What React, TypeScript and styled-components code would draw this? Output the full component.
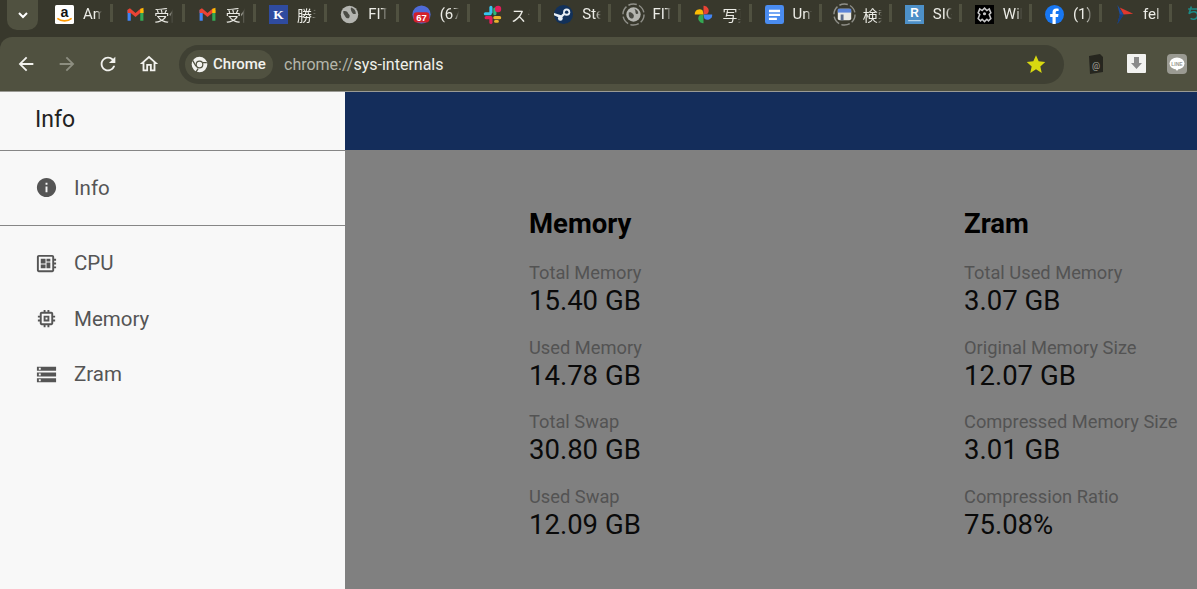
import React from 'react';
import styled, { createGlobalStyle } from 'styled-components';

const GlobalStyle = createGlobalStyle`
  html, body { margin: 0; padding: 0; height: 100%; overflow: hidden; background: #808080; }
  #root { height: 100%; }
  * { box-sizing: border-box; }
`;

const Page = styled.div`
  width: 1197px;
  height: 589px;
  display: flex;
  flex-direction: column;
  overflow: hidden;
  font-family: Roboto, 'Noto Sans CJK JP', sans-serif;
`;

const TabStrip = styled.div`
  height: 37px;
  flex: none;
  display: flex;
  align-items: flex-start;
  background: #38382c;
  padding-left: 7px;
  overflow: hidden;
`;

const TabSearch = styled.div`
  width: 31px;
  height: 30px;
  flex: none;
  margin-right: 4px;
  background: #505140;
  border-radius: 0 0 10px 10px;
  display: flex;
  align-items: center;
  justify-content: center;
`;

const Tab = styled.div<{ $narrow?: boolean }>`
  width: ${(p) => (p.$narrow ? '70.1px' : '71.33px')};
  height: 28px;
  flex: none;
  display: flex;
  align-items: center;
  padding-left: 13px;
  position: relative;
  &::after {
    content: '';
    position: absolute;
    right: 0;
    top: 4px;
    width: 3px;
    height: 18px;
    background: #505140;
  }
`;

const Favicon = styled.svg<{ $large?: boolean }>`
  width: ${(p) => (p.$large ? '23px' : '19px')};
  height: ${(p) => (p.$large ? '23px' : '19px')};
  margin: ${(p) => (p.$large ? '0 -2px' : '0')};
  flex: none;
`;

const TabTitle = styled.span`
  width: 19px;
  margin-left: 9px;
  overflow: hidden;
  white-space: nowrap;
  font-size: 15px;
  color: #ecece6;
  -webkit-mask-image: linear-gradient(to right, #000 70%, transparent 100%);
  mask-image: linear-gradient(to right, #000 70%, transparent 100%);
`;

const ToolbarBack = styled.div`
  height: 55px;
  flex: none;
  background: #38382c;
`;

const Toolbar = styled.div`
  height: 55px;
  display: flex;
  align-items: center;
  padding-left: 6px;
  background: #505140;
  border-top-left-radius: 12px;
  border-bottom: 1px solid #9a9a94;
`;

const NavButton = styled.div<{ $dim?: boolean }>`
  width: 40px;
  margin-right: 1px;
  flex: none;
  display: flex;
  justify-content: center;
  color: ${(p) => (p.$dim ? '#8d8e80' : '#f2f2ee')};
`;

const Omnibox = styled.div`
  width: 885px;
  height: 39px;
  flex: none;
  margin-left: 9px;
  border-radius: 20px;
  background: #3f4033;
  display: flex;
  align-items: center;
  padding: 0 18px 0 6px;
`;

const Chip = styled.div`
  width: 88px;
  height: 29px;
  border-radius: 15px;
  background: #505140;
  display: flex;
  align-items: center;
  gap: 5px;
  padding-left: 6px;
  font-size: 15px;
  font-weight: 500;
  color: #f2f2ee;
`;

const Url = styled.div`
  flex: 1;
  margin-left: 11px;
  font-size: 16px;
  color: #f0f0ea;
`;

const UrlScheme = styled.span`
  color: #b4b5aa;
`;

const Extensions = styled.div`
  display: flex;
  flex: none;
  margin-left: 12px;
`;

const Extension = styled.div`
  width: 40.5px;
  display: flex;
  justify-content: center;
`;

const Main = styled.div`
  flex: 1;
  display: flex;
  min-height: 0;
`;

const Sidebar = styled.nav`
  width: 345px;
  flex: none;
  background: #f8f8f8;
`;

const SidebarTitle = styled.div`
  height: 59px;
  padding: 12px 0 0 35px;
  font-size: 23px;
  line-height: 32px;
  color: #222;
  border-bottom: 1px solid #868686;
`;

const InfoGroup = styled.div`
  height: 75px;
  padding-top: 9px;
  border-bottom: 1px solid #868686;
`;

const NavList = styled.div`
  padding-top: 9.5px;
`;

const NavItem = styled.div`
  height: 55.5px;
  display: flex;
  align-items: center;
  padding-left: 35px;
  font-size: 20.5px;
  color: #555;
  svg {
    width: 23px;
    height: 23px;
    margin-right: 16px;
    fill: #555;
  }
`;

const Content = styled.div`
  flex: 1;
  background: #808080;
  display: flex;
  flex-direction: column;
`;

const Banner = styled.div`
  height: 58px;
  flex: none;
  background: #142d5b;
`;

const Columns = styled.div`
  display: grid;
  grid-template-columns: 435px 1fr;
  padding: 57px 0 0 184px;
`;

const Column = styled.section`
  display: flex;
  flex-direction: column;
`;

const Heading = styled.h2`
  margin: 0 0 21px;
  font-size: 27.5px;
  line-height: 34px;
  font-weight: 700;
  color: #000;
`;

const Stat = styled.div`
  height: 74.5px;
  white-space: nowrap;
`;

const StatLabel = styled.div`
  font-size: 18.3px;
  line-height: 22px;
  color: #535353;
`;

const StatValue = styled.div`
  margin-top: 1px;
  font-size: 27.5px;
  line-height: 32px;
  color: #0a0a0a;
`;

const Ring = () => (
  <circle cx="12" cy="12" r="11" fill="none" stroke="#8f8f88" strokeWidth="1.5" strokeDasharray="9 2.5" />
);

const favicons: Record<string, React.ReactNode> = {
  amazon: (
    <>
      <rect width="24" height="24" rx="2" fill="#fff" />
      <text x="12" y="15" textAnchor="middle" fontSize="18" fontWeight="700" fontFamily="Liberation Sans" fill="#111">a</text>
      <path d="M3 17c5 4 13 4 18 0" fill="none" stroke="#f90" strokeWidth="2" />
    </>
  ),
  gmail: (
    <>
      <path d="M2 6v14h4V10z" fill="#4285f4" />
      <path d="M22 6v14h-4V10z" fill="#34a853" />
      <path d="M2 6l3-2 7 6 7-6 3 2v4l-4 0-6 5-6-5-4 0z" fill="#ea4335" />
      <path d="M18 5l4-1.500V10h-4z" fill="#fbbc04" />
    </>
  ),
  k: (
    <>
      <rect width="24" height="24" fill="#2f4b9f" />
      <text x="12" y="18" textAnchor="middle" fontSize="17" fontWeight="700" fontFamily="Liberation Serif" fill="#fff">K</text>
    </>
  ),
  globe: (
    <>
      <circle cx="12" cy="12" r="11" fill="#b4b5b0" />
      <path d="M4 8c3-1 5 0 6 2s3 2 2 5-4 2-5 0-3-3-3-7zM14 3c4 1 6 4 6 8-2 1-4 0-5-2s-2-4-1-6z" fill="#4b4c45" />
    </>
  ),
  cal: (
    <>
      <circle cx="12" cy="12" r="11.500" fill="#4f6bd8" />
      <rect x="2" y="9" width="20" height="13" rx="4" fill="#d3202a" />
      <text x="12" y="20" textAnchor="middle" fontSize="12" fontWeight="700" fontFamily="Liberation Sans" fill="#fff">67</text>
    </>
  ),
  slack: (
    <>
      <rect x="1" y="9" width="10" height="4" rx="2" fill="#36c5f0" />
      <rect x="8" y="1" width="4" height="10" rx="2" fill="#36c5f0" />
      <rect x="13" y="3" width="4" height="10" rx="2" fill="#2eb67d" />
      <circle cx="19" cy="5" r="4" fill="#e01e5a" />
      <rect x="13" y="14" width="10" height="4" rx="2" fill="#ecb22e" />
      <rect x="2" y="14" width="10" height="4" rx="2" fill="#e01e5a" />
      <rect x="8" y="15" width="4" height="9" rx="2" fill="#e01e5a" />
      <rect x="14" y="19" width="6" height="3.500" rx="1.700" fill="#ecb22e" />
    </>
  ),
  steam: (
    <>
      <circle cx="12" cy="12" r="12" fill="#12315a" />
      <circle cx="16" cy="9" r="4.500" fill="#e8eef4" />
      <circle cx="16" cy="9" r="2.200" fill="#12315a" />
      <path d="M0 13l9 4 5-5-2-2-3 3-9-3z" fill="#e8eef4" />
      <circle cx="8" cy="17" r="3" fill="#e8eef4" />
    </>
  ),
  ringGlobe: (
    <>
      <Ring />
      <circle cx="12" cy="12" r="7.500" fill="#b4b5b0" />
      <path d="M7 10c2-1 3 0 4 1s2 2 1 4-3 1-4 0-1-3-1-5zM13 6c3 1 4 3 4 5-2 1-3 0-3-2s-1-2-1-3z" fill="#4b4c45" />
    </>
  ),
  photos: (
    <>
      <path d="M12 12V1a6 6 0 0 1 5 10z" fill="#ea4335" />
      <path d="M12 12h11a6 6 0 0 1-10 5z" fill="#4285f4" />
      <path d="M12 12v11a6 6 0 0 1-5-10z" fill="#34a853" />
      <path d="M12 12H1a6 6 0 0 1 10-5z" fill="#fbbc04" />
    </>
  ),
  docs: (
    <>
      <rect width="24" height="24" rx="3" fill="#4a8cf0" />
      <path d="M5 6h14v3H5zM5 11h14v3H5zM5 16h10v3H5z" fill="#fff" />
    </>
  ),
  ringStore: (
    <>
      <Ring />
      <rect x="5" y="6" width="14" height="12" rx="2" fill="#e8e8e4" />
      <rect x="5" y="6" width="14" height="4" fill="#5b84d8" />
      <rect x="8" y="12" width="3" height="6" fill="#5b6b88" />
    </>
  ),
  r: (
    <>
      <rect width="24" height="24" fill="#4d90c8" />
      <text x="12" y="15" textAnchor="middle" fontSize="15" fontWeight="700" fontFamily="Liberation Sans" fill="#fff">R</text>
      <rect x="4" y="19" width="16" height="1.500" fill="#bcd8ee" />
    </>
  ),
  space: (
    <>
      <rect width="24" height="24" fill="#000" />
      <path d="M12 4l3 3 3-2 2 5-2 2 2 5-3 3-2-2-3 3-3-3-2 2-3-3 2-5-2-2 2-5 3 2z" fill="none" stroke="#c8c8c8" strokeWidth="2" />
      <circle cx="12" cy="11" r="2" fill="#c8c8c8" />
    </>
  ),
  facebook: (
    <>
      <circle cx="12" cy="12" r="12" fill="#1877f2" />
      <path d="M13.500 24v-9h3l.6-3.500h-3.600V9.500c0-1.100.5-2 2-2h1.700V4.600c-1-.2-2-.3-3-.3-3 0-4.700 1.800-4.700 4.800v2.400H6.500V15h3v9z" fill="#fff" />
    </>
  ),
  fel: (
    <>
      <path d="M3 0l8 12-8 12 3-12z" fill="#1d4e9e" />
      <path d="M6 3l17 8-12 1z" fill="#e0382e" />
      <path d="M11 12l-5 0-3 12z" fill="#173d7c" />
    </>
  ),
  last: (
    <>
      <path d="M4 5h13M8 2l-3 9c4-4 11-3 11 2s-6 6-9 4M17 11c2 1 3 3 3 6" fill="none" stroke="#1b8a86" strokeWidth="2" />
    </>
  ),
};

const tabs = [
  { icon: 'amazon', title: 'Amazon' },
  { icon: 'gmail', title: '受信トレイ' },
  { icon: 'gmail', title: '受信トレイ' },
  { icon: 'k', title: '勝手' },
  { icon: 'globe', title: 'FIT' },
  { icon: 'cal', title: '(67)' },
  { icon: 'slack', title: 'スラ' },
  { icon: 'steam', title: 'Steam', narrow: true },
  { icon: 'ringGlobe', title: 'FIT', narrow: true, large: true },
  { icon: 'photos', title: '写真', narrow: true },
  { icon: 'docs', title: 'Untitled', narrow: true },
  { icon: 'ringStore', title: '検索', narrow: true, large: true },
  { icon: 'r', title: 'SIGN', narrow: true },
  { icon: 'space', title: 'Wiki', narrow: true },
  { icon: 'facebook', title: '(1)', narrow: true },
  { icon: 'fel', title: 'fel', narrow: true },
  { icon: 'last', title: '', narrow: true },
];

const stats = [
  {
    title: 'Memory',
    rows: [
      ['Total Memory', '15.40 GB'],
      ['Used Memory', '14.78 GB'],
      ['Total Swap', '30.80 GB'],
      ['Used Swap', '12.09 GB'],
    ],
  },
  {
    title: 'Zram',
    rows: [
      ['Total Used Memory', '3.07 GB'],
      ['Original Memory Size', '12.07 GB'],
      ['Compressed Memory Size', '3.01 GB'],
      ['Compression Ratio', '75.08%'],
    ],
  },
];

function Icon({ d, size = 22 }: { d: string; size?: number }) {
  return (
    <svg width={size} height={size} viewBox="0 0 24 24" fill="currentColor">
      <path d={d} />
    </svg>
  );
}

const ICONS = {
  back: 'M20 11H7.83l5.59-5.59L12 4l-8 8 8 8 1.41-1.41L7.83 13H20v-2z',
  forward: 'M4 11h12.17l-5.59-5.59L12 4l8 8-8 8-1.41-1.41L16.17 13H4v-2z',
  refresh:
    'M17.65 6.35C16.2 4.9 14.21 4 12 4c-4.42 0-7.99 3.58-7.99 8s3.57 8 7.99 8c3.73 0 6.84-2.55 7.73-6h-2.08c-.82 2.33-3.04 4-5.65 4-3.31 0-6-2.69-6-6s2.69-6 6-6c1.66 0 3.14.69 4.22 1.78L13 11h7V4l-2.35 2.35z',
  home: 'M12 5.69l5 4.5V18h-2v-6H9v6H7v-7.81l5-4.5M12 3L2 12h3v8h6v-6h2v6h6v-8h3L12 3z',
  info: 'M12 2C6.48 2 2 6.48 2 12s4.48 10 10 10 10-4.48 10-10S17.52 2 12 2zm1 15h-2v-6h2v6zm0-8h-2V7h2v2z',
  cpu: 'M22 9V7h-2V5c0-1.1-.9-2-2-2H4c-1.100 0-2 .9-2 2v14c0 1.100.9 2 2 2h14c1.100 0 2-.9 2-2v-2h2v-2h-2v-2h2v-2h-2V9h2zm-4 10H4V5h14v14zM6 13h5v4H6zm6-6h4v3h-4zM6 7h5v5H6zm6 4h4v6h-4z',
  memory:
    'M15 9H9v6h6V9zm-2 4h-2v-2h2v2zm8-2V9h-2V7c0-1.100-.9-2-2-2h-2V3h-2v2h-2V3H9v2H7c-1.100 0-2 .9-2 2v2H3v2h2v2H3v2h2v2c0 1.100.9 2 2 2h2v2h2v-2h2v2h2v-2h2c1.100 0 2-.9 2-2v-2h2v-2h-2v-2h2zm-4 6H7V7h10v10z',
  zram: 'M2 20h20v-4H2v4zm2-3h2v2H4v-2zM2 4v4h20V4H2zm4 3H4V5h2v2zm-4 7h20v-4H2v4zm2-3h2v2H4v-2z',
};

export default function App() {
  return (
    <Page>
      <GlobalStyle />
      <TabStrip>
        <TabSearch>
          <svg width="14" height="14" viewBox="0 0 14 14">
            <path d="M3 5l4 4 4-4" fill="none" stroke="#fff" strokeWidth="2" />
          </svg>
        </TabSearch>
        {tabs.map((tab, i) => (
          <Tab key={i} $narrow={tab.narrow}>
            <Favicon viewBox="0 0 24 24" $large={tab.large}>
              {favicons[tab.icon]}
            </Favicon>
            <TabTitle>{tab.title}</TabTitle>
          </Tab>
        ))}
      </TabStrip>
      <ToolbarBack>
        <Toolbar>
          <NavButton>
            <Icon d={ICONS.back} />
          </NavButton>
          <NavButton $dim>
            <Icon d={ICONS.forward} />
          </NavButton>
          <NavButton>
            <Icon d={ICONS.refresh} />
          </NavButton>
          <NavButton>
            <Icon d={ICONS.home} />
          </NavButton>
          <Omnibox>
            <Chip>
              <svg width="17" height="17" viewBox="0 0 24 24">
                <circle cx="12" cy="12" r="11" fill="#f2f2ee" />
                <path d="M7 14.500L2.500 6.500M16.800 9.200h5.500M10 17.800l-3 5" stroke="#505140" strokeWidth="1.800" />
                <circle cx="12" cy="12" r="5.500" fill="#505140" />
                <circle cx="12" cy="12" r="3.800" fill="#f2f2ee" />
              </svg>
              Chrome
            </Chip>
            <Url>
              <UrlScheme>chrome://</UrlScheme>sys-internals
            </Url>
            <svg width="20" height="20" viewBox="0 0 24 24">
              <path d="M12 1.500l3.200 7.300 7.900.8-5.900 5.300 1.700 7.800L12 18.400l-6.900 4.300 1.700-7.800L.9 9.600l7.900-.8z" fill="#d8d810" />
            </svg>
          </Omnibox>
          <Extensions>
            <Extension>
              <svg width="16" height="20" viewBox="0 0 16 20">
                <path d="M1 2l11-2 3 3v15l-13 2z" fill="#26261f" />
                <text x="8" y="15" textAnchor="middle" fontSize="9" fontFamily="Roboto" fill="#a8a8a0">@</text>
              </svg>
            </Extension>
            <Extension>
              <svg width="19" height="19" viewBox="0 0 19 19">
                <rect width="19" height="19" rx="1" fill="#f2f2f0" />
                <path d="M7 3h5v6h3l-5.500 6L4 9h3z" fill="#8a8a8a" />
              </svg>
            </Extension>
            <Extension>
              <svg width="20" height="20" viewBox="0 0 20 20">
                <rect width="20" height="20" rx="4" fill="#9a9a92" />
                <ellipse cx="10" cy="9.500" rx="7.500" ry="6" fill="#fff" />
                <path d="M8 14l2 3 2-3z" fill="#fff" />
                <text x="10" y="11.500" textAnchor="middle" fontSize="5" fontWeight="700" fontFamily="Liberation Sans" fill="#9a9a92">LINE</text>
              </svg>
            </Extension>
          </Extensions>
        </Toolbar>
      </ToolbarBack>
      <Main>
        <Sidebar>
          <SidebarTitle>Info</SidebarTitle>
          <InfoGroup>
            <NavItem>
              <svg viewBox="0 0 24 24">
                <path d={ICONS.info} />
              </svg>
              Info
            </NavItem>
          </InfoGroup>
          <NavList>
            <NavItem>
              <svg viewBox="0 0 24 24">
                <path d={ICONS.cpu} />
              </svg>
              CPU
            </NavItem>
            <NavItem>
              <svg viewBox="0 0 24 24">
                <path d={ICONS.memory} />
              </svg>
              Memory
            </NavItem>
            <NavItem>
              <svg viewBox="0 0 24 24">
                <path d={ICONS.zram} />
              </svg>
              Zram
            </NavItem>
          </NavList>
        </Sidebar>
        <Content>
          <Banner />
          <Columns>
            {stats.map((col) => (
              <Column key={col.title}>
                <Heading>{col.title}</Heading>
                {col.rows.map(([label, value]) => (
                  <Stat key={label}>
                    <StatLabel>{label}</StatLabel>
                    <StatValue>{value}</StatValue>
                  </Stat>
                ))}
              </Column>
            ))}
          </Columns>
        </Content>
      </Main>
    </Page>
  );
}
